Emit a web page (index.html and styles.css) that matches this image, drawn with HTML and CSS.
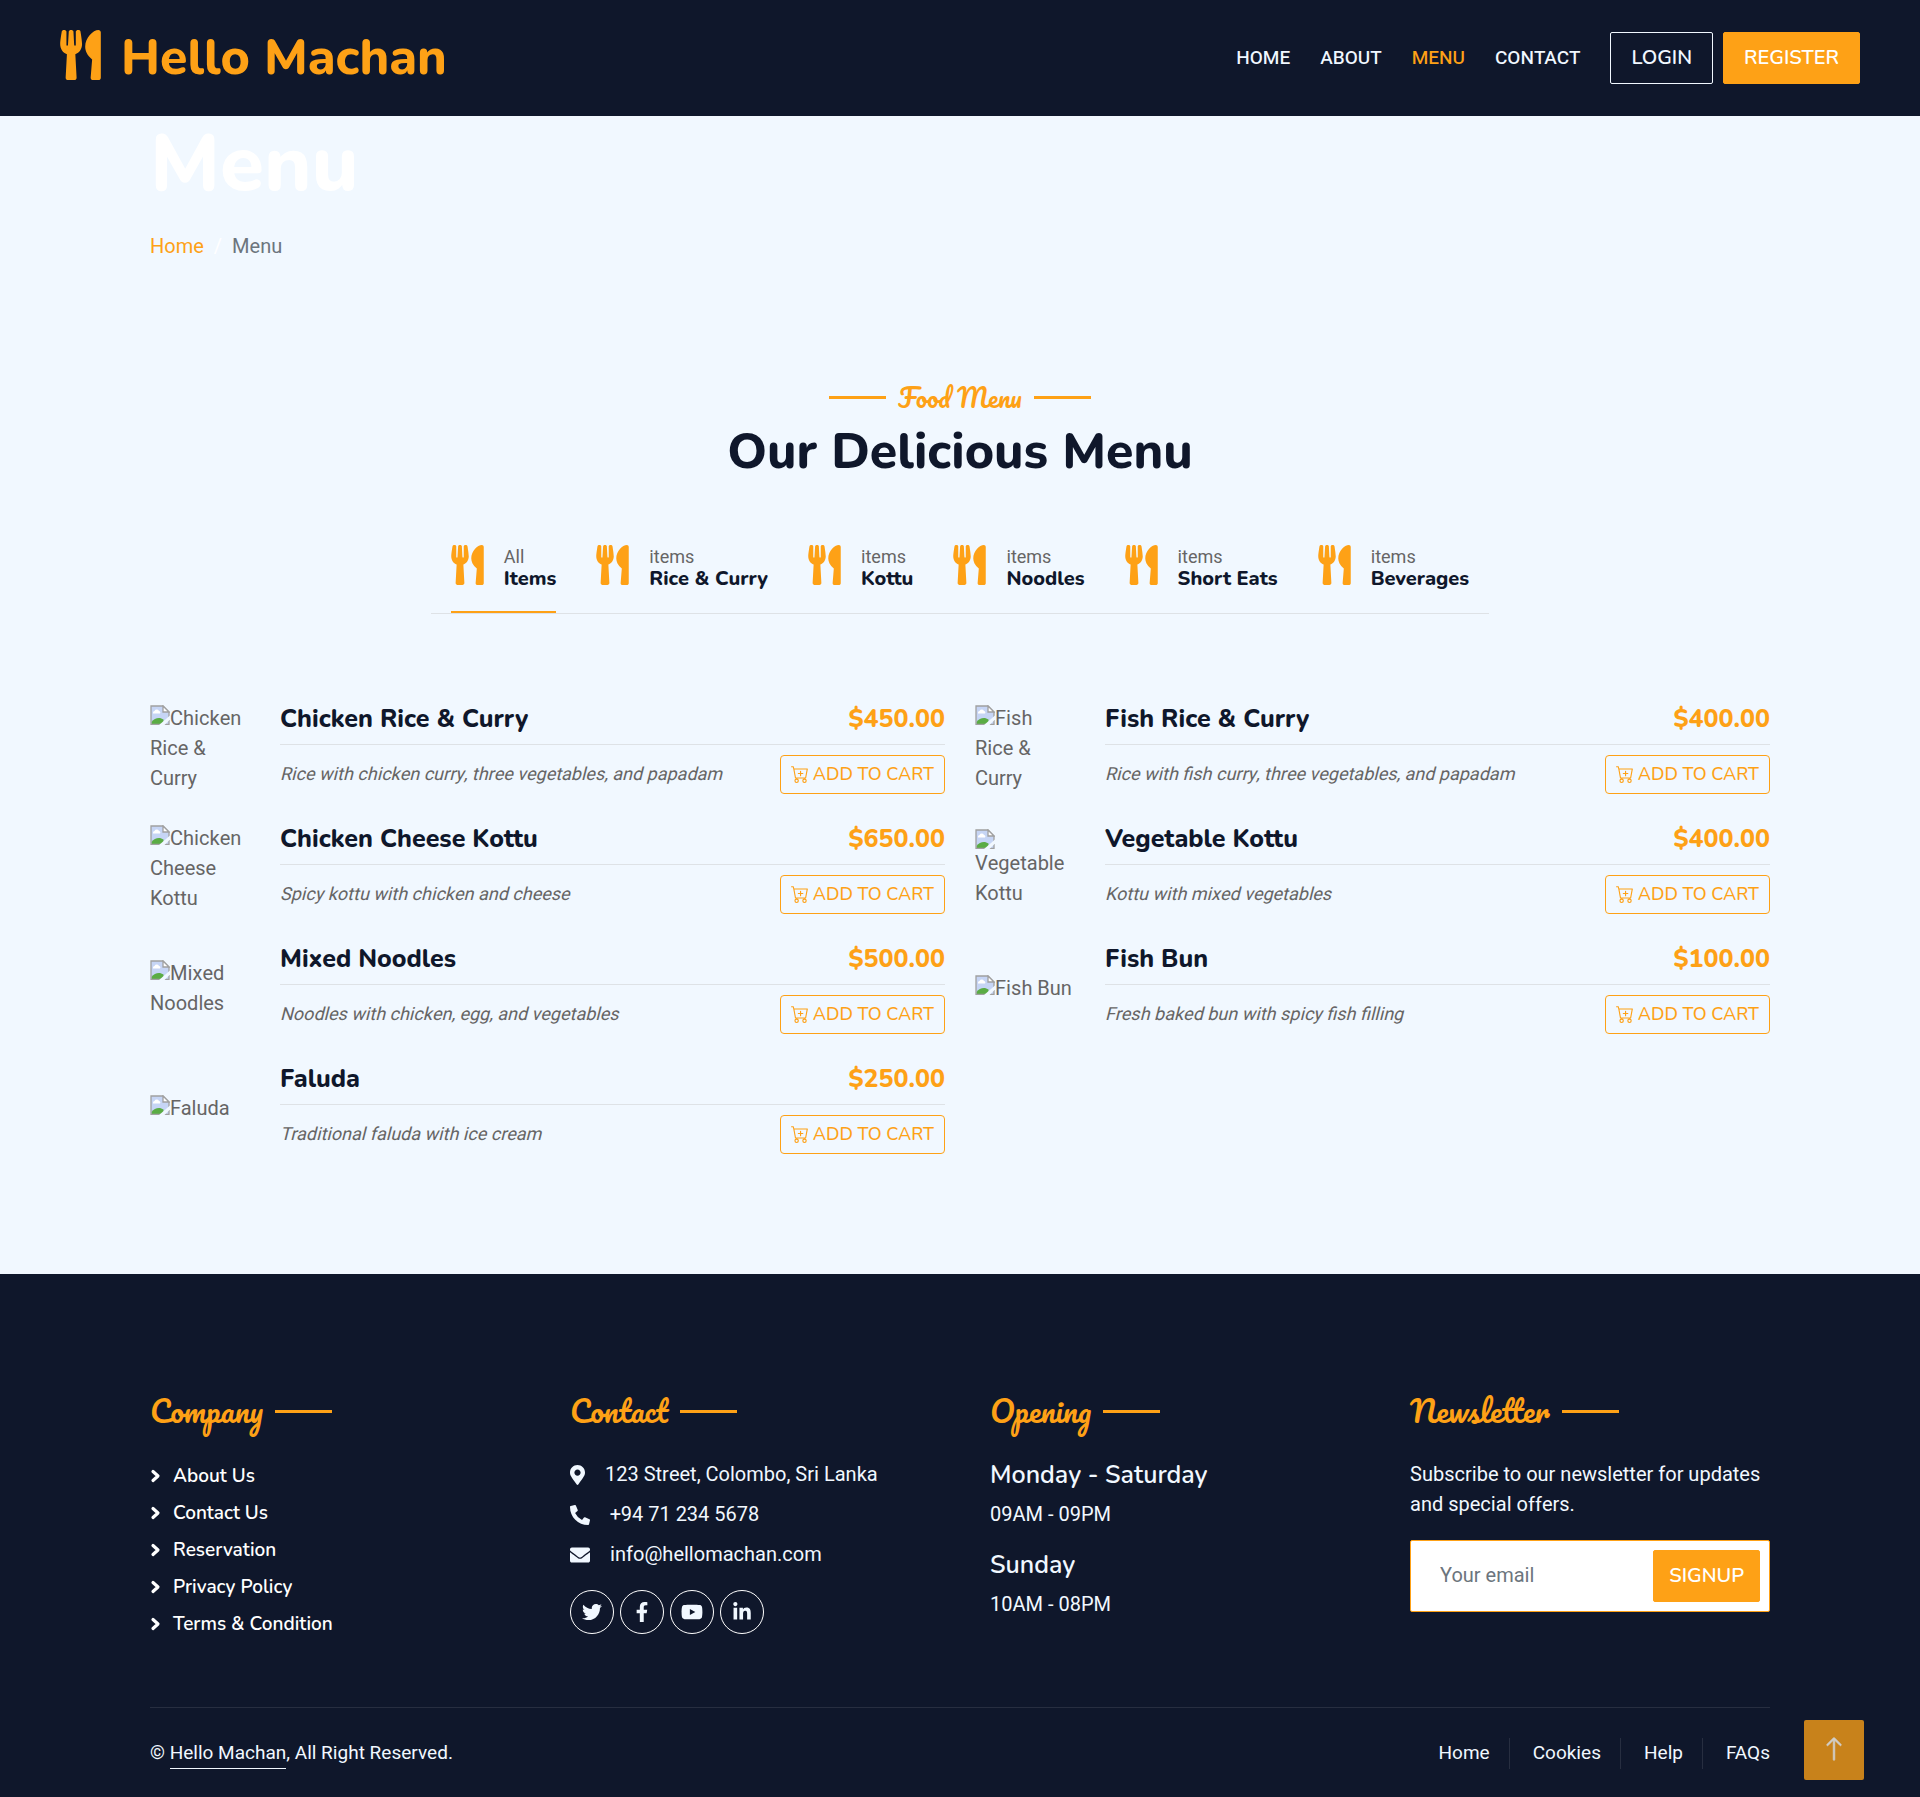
FILE: index.html
```html
<!DOCTYPE html>
<html lang="en">
<head>
<meta charset="utf-8">
<meta name="viewport" content="width=device-width, initial-scale=1">
<title>Hello Machan - Menu</title>
<link rel="stylesheet" href="styles.css">
</head>
<body>
<svg class="sprite" aria-hidden="true">
  <symbol id="utensils" viewBox="0 0 416 512"><path d="M207.9 15.2c.8 4.7 16.1 94.5 16.1 128.8 0 52.3-27.8 89.6-68.9 104.6L168 486.7c.7 13.7-10.2 25.3-24 25.3H80c-13.7 0-24.7-11.5-24-25.3l12.9-238.1C27.7 233.6 0 196.2 0 144 0 109.6 15.3 19.9 16.1 15.2 19.3-5.1 61.4-5.4 64 16.3v141.2c1.3 3.4 15.1 3.2 16 0 1.4-25.3 7.9-139.2 8-141.8 3.3-20.8 44.7-20.8 47.9 0 .2 2.7 6.6 116.5 8 141.8.9 3.2 14.8 3.4 16 0V16.3c2.6-21.6 44.8-21.4 47.9-1.1zm119.2 285.7l-15 185.1c-1.2 14 9.9 26 23.9 26h56c13.3 0 24-10.7 24-24V24c0-13.2-10.7-24-24-24-82.5 0-221.4 178.5-64.9 300.9z"/></symbol>
  <symbol id="cart" viewBox="0 0 16 16"><path d="M9 5.5a.5.5 0 0 0-1 0V7H6.500a.5.5 0 0 0 0 1H8v1.500a.5.5 0 0 0 1 0V8h1.500a.5.5 0 0 0 0-1H9V5.500z"/><path d="M.5 1a.5.5 0 0 0 0 1h1.110l.401 1.607 1.498 7.985A.5.5 0 0 0 4 12h1a2 2 0 1 0 0 4 2 2 0 0 0 0-4h7a2 2 0 1 0 0 4 2 2 0 0 0 0-4h1a.5.5 0 0 0 .491-.408l1.500-8A.5.5 0 0 0 14.500 3H2.890l-.405-1.621A.5.5 0 0 0 2 1H.5zm3.915 10L3.102 4h10.796l-1.313 7h-8.170zM6 14a1 1 0 1 1-2 0 1 1 0 0 1 2 0zm7 0a1 1 0 1 1-2 0 1 1 0 0 1 2 0z"/></symbol>
  <symbol id="broken" viewBox="0 0 20 20"><path d="M1 1h12l6 6v12H1z" fill="#c6d5f5"/><path d="M3 8.500a2 2 0 0 1 1.500-2.500 2.500 2.500 0 0 1 4.500 0 1.500 1.500 0 0 1 1 2.500z" fill="#fff"/><path d="M1.500 19v-2c3-4 8-5.500 12-2.500V19z" fill="#5aac44"/><path d="M1 19.500V1h12l6 6v12.500z" fill="none" stroke="#a0a0a0" stroke-width="1.300"/><path d="M13 1v6h6z" fill="#fff" stroke="#a0a0a0" stroke-width="1.300"/><path d="M8.500 20.500L20.500 10v4L14 20.500z" fill="#f1f8ff"/></symbol>
  <symbol id="chevron" viewBox="0 0 10 14"><path d="M2.500 2.500L7.500 7l-5 4.500" fill="none" stroke="currentColor" stroke-width="3.200" stroke-linecap="round" stroke-linejoin="round"/></symbol>
  <symbol id="pin" viewBox="0 0 384 512"><path d="M172.268 501.670C26.970 291.031 0 269.413 0 192 0 85.961 85.961 0 192 0s192 85.961 192 192c0 77.413-26.970 99.031-172.268 309.670-9.535 13.774-29.930 13.773-39.464 0zM192 272c44.183 0 80-35.817 80-80s-35.817-80-80-80-80 35.817-80 80 35.817 80 80 80z"/></symbol>
  <symbol id="phone" viewBox="0 0 512 512"><path d="M497.390 361.800l-112-48a24 24 0 0 0-28 6.900l-49.600 60.600A370.660 370.660 0 0 1 130.600 204.110l60.600-49.600a23.940 23.940 0 0 0 6.900-28l-48-112A24.160 24.160 0 0 0 122.600.610l-104 24A24 24 0 0 0 0 48c0 256.500 207.900 464 464 464a24 24 0 0 0 23.400-18.600l24-104a24.290 24.290 0 0 0-14.010-27.600z"/></symbol>
  <symbol id="mail" viewBox="0 0 512 512"><path d="M502.300 190.800c3.900-3.100 9.700-.2 9.700 4.700V400c0 26.500-21.500 48-48 48H48c-26.500 0-48-21.500-48-48V195.600c0-5 5.700-7.800 9.700-4.700 22.400 17.400 52.100 39.500 154.100 113.600 21.100 15.400 56.700 47.800 92.200 47.600 35.700.3 72-32.800 92.300-47.600 102-74.100 131.600-96.300 154-113.700zM256 320c23.200.4 56.600-29.200 73.400-41.400 132.700-96.300 142.800-104.700 173.400-128.700 5.800-4.500 9.200-11.500 9.200-18.900v-19c0-26.500-21.500-48-48-48H48c-26.500 0-48 21.500-48 48v19c0 7.400 3.400 14.300 9.200 18.900 30.600 23.900 40.700 32.400 173.400 128.700 16.800 12.200 50.200 41.800 73.400 41.400z"/></symbol>
  <symbol id="twitter" viewBox="0 0 512 512"><path d="M459.370 151.716c.325 4.548.325 9.097.325 13.645 0 138.720-105.583 298.558-298.558 298.558-59.452 0-114.680-17.219-161.137-47.106 8.447.974 16.568 1.299 25.340 1.299 49.055 0 94.213-16.568 130.274-44.832-46.132-.975-84.792-31.188-98.112-72.772 6.498.974 12.995 1.624 19.818 1.624 9.421 0 18.843-1.300 27.614-3.573-48.081-9.747-84.143-51.980-84.143-102.985v-1.299c13.969 7.797 30.214 12.670 47.431 13.319-28.264-18.843-46.781-51.005-46.781-87.391 0-19.492 5.197-37.360 14.294-52.954 51.655 63.675 129.300 105.258 216.365 109.807-1.624-7.797-2.599-15.918-2.599-24.040 0-57.828 46.782-104.934 104.934-104.934 30.213 0 57.502 12.670 76.670 33.137 23.715-4.548 46.456-13.320 66.599-25.340-7.798 24.366-24.366 44.833-46.132 57.827 21.117-2.273 41.584-8.122 60.426-16.243-14.292 20.791-32.161 39.308-52.628 54.253z"/></symbol>
  <symbol id="facebook" viewBox="0 0 320 512"><path d="M279.140 288l14.220-92.660h-88.910v-60.130c0-25.350 12.420-50.060 52.240-50.060h40.420V6.260S260.430 0 225.360 0c-73.220 0-121.080 44.380-121.080 124.720v70.620H22.890V288h81.390v224h100.170V288z"/></symbol>
  <symbol id="youtube" viewBox="0 0 576 512"><path d="M549.655 124.083c-6.281-23.650-24.787-42.276-48.284-48.597C458.781 64 288 64 288 64S117.220 64 74.629 75.486c-23.497 6.322-42.003 24.947-48.284 48.597-11.412 42.867-11.412 132.305-11.412 132.305s0 89.438 11.412 132.305c6.281 23.650 24.787 41.500 48.284 47.821C117.220 448 288 448 288 448s170.780 0 213.371-11.486c23.497-6.321 42.003-24.171 48.284-47.821 11.412-42.867 11.412-132.305 11.412-132.305s0-89.438-11.412-132.305zm-317.510 213.508V175.185l142.739 81.205-142.739 81.201z"/></symbol>
  <symbol id="linkedin" viewBox="0 0 448 512"><path d="M100.280 448H7.400V148.900h92.880zM53.790 108.100C24.090 108.100 0 83.500 0 53.800a53.790 53.790 0 0 1 107.580 0c0 29.700-24.100 54.300-53.790 54.300zM447.900 448h-92.680V302.400c0-34.700-.7-79.200-48.290-79.200-48.290 0-55.690 37.700-55.690 76.700V448h-92.780V148.900h89.080v40.800h1.300c12.400-23.500 42.690-48.300 87.880-48.300 94 0 111.280 61.900 111.280 142.300V448z"/></symbol>
  <symbol id="arrow-up" viewBox="0 0 16 16"><path stroke="currentColor" stroke-width=".4" d="M8 15a.5.5 0 0 0 .5-.5V2.707l3.146 3.147a.5.5 0 0 0 .708-.708l-4-4a.5.5 0 0 0-.708 0l-4 4a.5.5 0 1 0 .708.708L7.500 2.707V14.500a.5.5 0 0 0 .5.5z"/></symbol>
</svg>

<header class="navbar">
  <a class="brand" href="#"><svg class="brand-icon" aria-hidden="true"><use href="#utensils"/></svg><span>Hello Machan</span></a>
  <nav class="nav" aria-label="Main">
    <a href="#">HOME</a>
    <a href="#">ABOUT</a>
    <a class="active" href="#">MENU</a>
    <a href="#">CONTACT</a>
  </nav>
  <div class="account">
    <button class="btn btn-light" type="button">LOGIN</button>
    <button class="btn" type="button">REGISTER</button>
  </div>
</header>

<section class="hero container">
  <h1>Menu</h1>
  <ol class="crumbs">
    <li><a href="#">Home</a></li>
    <li class="slash" aria-hidden="true">/</li>
    <li>Menu</li>
  </ol>
</section>

<main class="container">
  <div class="section-title">
    <p class="script">Food Menu</p>
    <h2>Our Delicious Menu</h2>
  </div>

  <nav class="tabs" aria-label="Menu categories">
    <a class="tab current" href="#"><svg aria-hidden="true"><use href="#utensils"/></svg><span><small>All</small><b>Items</b></span></a>
    <a class="tab" href="#"><svg aria-hidden="true"><use href="#utensils"/></svg><span><small>items</small><b>Rice &amp; Curry</b></span></a>
    <a class="tab" href="#"><svg aria-hidden="true"><use href="#utensils"/></svg><span><small>items</small><b>Kottu</b></span></a>
    <a class="tab" href="#"><svg aria-hidden="true"><use href="#utensils"/></svg><span><small>items</small><b>Noodles</b></span></a>
    <a class="tab" href="#"><svg aria-hidden="true"><use href="#utensils"/></svg><span><small>items</small><b>Short Eats</b></span></a>
    <a class="tab" href="#"><svg aria-hidden="true"><use href="#utensils"/></svg><span><small>items</small><b>Beverages</b></span></a>
  </nav>

  <div class="menu">
    <article class="dish">
      <div class="photo"><svg aria-hidden="true"><use href="#broken"/></svg>Chicken Rice &amp; Curry</div>
      <div class="info">
        <h3><span>Chicken Rice &amp; Curry</span><span class="price">$450.00</span></h3>
        <div class="row"><i>Rice with chicken curry, three vegetables, and papadam</i><button class="add" type="button"><svg aria-hidden="true"><use href="#cart"/></svg>ADD TO CART</button></div>
      </div>
    </article>
    <article class="dish">
      <div class="photo"><svg aria-hidden="true"><use href="#broken"/></svg>Fish Rice &amp; Curry</div>
      <div class="info">
        <h3><span>Fish Rice &amp; Curry</span><span class="price">$400.00</span></h3>
        <div class="row"><i>Rice with fish curry, three vegetables, and papadam</i><button class="add" type="button"><svg aria-hidden="true"><use href="#cart"/></svg>ADD TO CART</button></div>
      </div>
    </article>
    <article class="dish">
      <div class="photo"><svg aria-hidden="true"><use href="#broken"/></svg>Chicken Cheese Kottu</div>
      <div class="info">
        <h3><span>Chicken Cheese Kottu</span><span class="price">$650.00</span></h3>
        <div class="row"><i>Spicy kottu with chicken and cheese</i><button class="add" type="button"><svg aria-hidden="true"><use href="#cart"/></svg>ADD TO CART</button></div>
      </div>
    </article>
    <article class="dish">
      <div class="photo stacked"><svg aria-hidden="true"><use href="#broken"/></svg>Vegetable Kottu</div>
      <div class="info">
        <h3><span>Vegetable Kottu</span><span class="price">$400.00</span></h3>
        <div class="row"><i>Kottu with mixed vegetables</i><button class="add" type="button"><svg aria-hidden="true"><use href="#cart"/></svg>ADD TO CART</button></div>
      </div>
    </article>
    <article class="dish">
      <div class="photo"><svg aria-hidden="true"><use href="#broken"/></svg>Mixed Noodles</div>
      <div class="info">
        <h3><span>Mixed Noodles</span><span class="price">$500.00</span></h3>
        <div class="row"><i>Noodles with chicken, egg, and vegetables</i><button class="add" type="button"><svg aria-hidden="true"><use href="#cart"/></svg>ADD TO CART</button></div>
      </div>
    </article>
    <article class="dish">
      <div class="photo"><svg aria-hidden="true"><use href="#broken"/></svg>Fish Bun</div>
      <div class="info">
        <h3><span>Fish Bun</span><span class="price">$100.00</span></h3>
        <div class="row"><i>Fresh baked bun with spicy fish filling</i><button class="add" type="button"><svg aria-hidden="true"><use href="#cart"/></svg>ADD TO CART</button></div>
      </div>
    </article>
    <article class="dish">
      <div class="photo"><svg aria-hidden="true"><use href="#broken"/></svg>Faluda</div>
      <div class="info">
        <h3><span>Faluda</span><span class="price">$250.00</span></h3>
        <div class="row"><i>Traditional faluda with ice cream</i><button class="add" type="button"><svg aria-hidden="true"><use href="#cart"/></svg>ADD TO CART</button></div>
      </div>
    </article>
  </div>
</main>

<footer class="footer">
  <div class="container columns">
    <section>
      <h4 class="script">Company</h4>
      <ul class="links">
        <li><a href="#"><svg aria-hidden="true"><use href="#chevron"/></svg>About Us</a></li>
        <li><a href="#"><svg aria-hidden="true"><use href="#chevron"/></svg>Contact Us</a></li>
        <li><a href="#"><svg aria-hidden="true"><use href="#chevron"/></svg>Reservation</a></li>
        <li><a href="#"><svg aria-hidden="true"><use href="#chevron"/></svg>Privacy Policy</a></li>
        <li><a href="#"><svg aria-hidden="true"><use href="#chevron"/></svg>Terms &amp; Condition</a></li>
      </ul>
    </section>
    <section>
      <h4 class="script">Contact</h4>
      <address>
        <p><svg class="narrow" aria-hidden="true"><use href="#pin"/></svg>123 Street, Colombo, Sri Lanka</p>
        <p><svg aria-hidden="true"><use href="#phone"/></svg>+94 71 234 5678</p>
        <p><svg aria-hidden="true"><use href="#mail"/></svg>info@hellomachan.com</p>
      </address>
      <div class="social">
        <a href="#" aria-label="Twitter"><svg aria-hidden="true"><use href="#twitter"/></svg></a>
        <a href="#" aria-label="Facebook"><svg aria-hidden="true"><use href="#facebook"/></svg></a>
        <a href="#" aria-label="YouTube"><svg aria-hidden="true"><use href="#youtube"/></svg></a>
        <a href="#" aria-label="LinkedIn"><svg aria-hidden="true"><use href="#linkedin"/></svg></a>
      </div>
    </section>
    <section class="hours">
      <h4 class="script">Opening</h4>
      <h5>Monday - Saturday</h5>
      <p>09AM - 09PM</p>
      <h5>Sunday</h5>
      <p>10AM - 08PM</p>
    </section>
    <section>
      <h4 class="script">Newsletter</h4>
      <p>Subscribe to our newsletter for updates and special offers.</p>
      <form class="signup">
        <input type="email" placeholder="Your email" aria-label="Your email">
        <button class="btn" type="button">SIGNUP</button>
      </form>
    </section>
  </div>
  <div class="container">
    <div class="legal">
      <p>© <a href="#">Hello Machan</a>, All Right Reserved.</p>
      <nav aria-label="Footer">
        <a href="#">Home</a>
        <a href="#">Cookies</a>
        <a href="#">Help</a>
        <a href="#">FAQs</a>
      </nav>
    </div>
  </div>
</footer>
<a class="to-top" href="#" aria-label="Back to top"><svg aria-hidden="true"><use href="#arrow-up"/></svg></a>
</body>
</html>
```
FILE: styles.css
```css
:root {
  --primary: #fea116;
  --dark: #0f172b;
  --light: #f1f8ff;
  --muted: #666565;
  --line: #dee2e6;
  --heading: Nunito, Lato, sans-serif;
  --script: Pacifico, "Liberation Serif", serif;
}

* { box-sizing: border-box; }

body {
  margin: 0;
  background: var(--light);
  color: var(--muted);
  font: 20px/30px Heebo, Roboto, sans-serif;
}

h1, h2, h3, h4, h5, p, ul, ol { margin: 0; padding: 0; font-weight: inherit; }
ul, ol { list-style: none; }
a { color: inherit; text-decoration: none; }
svg { fill: currentColor; flex: none; }
.sprite { position: absolute; width: 0; height: 0; }

.container { max-width: 1650px; margin: 0 auto; padding: 0 15px; }

.navbar {
  display: flex;
  align-items: center;
  padding: 25px 60px;
  background: var(--dark);
}
.brand {
  display: flex;
  align-items: center;
  gap: 20px;
  margin-right: auto;
  color: var(--primary);
  font: 800 50px/66px var(--heading);
}
.brand-icon { width: 41px; height: 50px; margin-bottom: 6px; }
.nav { display: flex; gap: 30px; color: var(--light); font-size: 19px; font-weight: 500; }
.nav .active { color: var(--primary); }
.account { display: flex; gap: 10px; margin-left: 30px; }

.btn {
  padding: 10px 20px;
  border: 1px solid var(--primary);
  border-radius: 2px;
  background: var(--primary);
  color: #fff;
  font: 600 20px/30px var(--heading);
}
.btn-light { background: transparent; border-color: var(--light); color: var(--light); }

.hero h1 { color: #fff; font: 800 80px/96px var(--heading); }
.crumbs { display: flex; gap: 10px; margin-top: 20px; }
.crumbs a { color: var(--primary); }
.crumbs li { color: #6c757d; }
.crumbs .slash { color: #fff; }

.script { color: var(--primary); font: 400 25px/30px var(--script); }
.section-title { display: flex; flex-direction: column; align-items: center; margin-top: 120px; }
.section-title .script, h4.script { display: flex; align-items: center; gap: 12px; }
.section-title .script::before, .script::after {
  content: "";
  width: 57px;
  height: 3px;
  background: var(--primary);
}
.section-title h2 { margin-top: 10px; color: var(--dark); font: 800 50px/60px var(--heading); }

.tabs {
  display: flex;
  gap: 40px;
  width: fit-content;
  margin: 63px auto 90px;
  padding: 0 20px;
  border-bottom: 1px solid var(--line);
}
.tab { display: flex; align-items: flex-start; gap: 20px; padding-bottom: 20px; border-bottom: 2px solid transparent; }
.tab.current { border-color: var(--primary); }
.tab svg { width: 33px; height: 40px; color: var(--primary); }
.tab small { display: block; font-size: 18px; line-height: 25px; }
.tab b { display: block; margin-top: -3px; color: var(--dark); font: 800 20px/24px var(--heading); }

.menu { display: grid; grid-template-columns: 1fr 1fr; gap: 30px; }
.dish { display: flex; align-items: center; gap: 30px; }
.photo { flex: none; width: 100px; padding-right: 2px; }
.photo svg { width: 20px; height: 20px; }
.photo.stacked svg { display: block; }
.info { flex: 1; }
.info h3 {
  display: flex;
  justify-content: space-between;
  padding-bottom: 10px;
  border-bottom: 1px solid var(--line);
  color: var(--dark);
  font: 800 25px/30px var(--heading);
}
.info .price { color: var(--primary); }
.row { display: flex; align-items: center; justify-content: space-between; margin-top: 10px; font-size: 18px; }
.add {
  display: flex;
  align-items: center;
  gap: 4px;
  padding: 5px 10px;
  border: 1px solid var(--primary);
  border-radius: 4px;
  background: transparent;
  color: var(--primary);
  font: 500 18px/27px var(--heading);
}
.add svg { width: 18px; height: 18px; margin-bottom: 2px; }

.footer { margin-top: 120px; padding-top: 122px; background: var(--dark); color: var(--light); }
.columns { display: grid; grid-template-columns: repeat(4, minmax(0, 1fr)); gap: 60px; }
h4.script { margin-bottom: 34px; font-size: 30px; }
.links { padding-top: 1px; }
.links a { display: flex; align-items: center; gap: 12px; margin-bottom: 7px; color: #fff; font: 600 19px/30px var(--heading); }
.links svg { width: 11px; height: 14px; }
address { font-style: normal; }
address p { display: flex; align-items: center; gap: 20px; margin-bottom: 10px; }
address svg { width: 20px; height: 20px; }
address .narrow { width: 15px; }
.social { display: flex; gap: 6px; margin-top: 20px; }
.social a {
  display: flex;
  align-items: center;
  justify-content: center;
  width: 44px;
  height: 44px;
  border: 1px solid #fff;
  border-radius: 50%;
}
.social svg { width: 22px; height: 20px; }
.hours h5 { font: 600 25px/30px var(--heading); }
.hours p { margin: 10px 0 20px; }
.signup {
  display: flex;
  gap: 10px;
  margin-top: 20px;
  padding: 9px;
  border: 1px solid var(--primary);
  border-radius: 2px;
  background: #fff;
}
.signup input { flex: 1; min-width: 0; padding: 0 20px; border: 0; background: transparent; font: inherit; }
.signup input::placeholder { color: #6c757d; }
.signup .btn { padding: 10px 15px; }

.legal {
  display: flex;
  justify-content: space-between;
  margin-top: 61px;
  padding: 30px 0 28px;
  border-top: 1px solid #272e40;
  font-size: 19px;
}
.legal p a { display: inline-block; border-bottom: 1px solid var(--light); }
.legal nav { display: flex; gap: 23px; }
.legal nav a:not(:last-child) { padding-right: 19px; border-right: 1px solid #272e40; }

.to-top {
  position: fixed;
  right: 56px;
  bottom: 17px;
  display: flex;
  align-items: center;
  justify-content: center;
  width: 60px;
  height: 60px;
  border-radius: 2px;
  background: #c8821b;
  color: #d0cdc8;
}
.to-top svg { width: 26px; height: 26px; margin-bottom: 3px; }
```
